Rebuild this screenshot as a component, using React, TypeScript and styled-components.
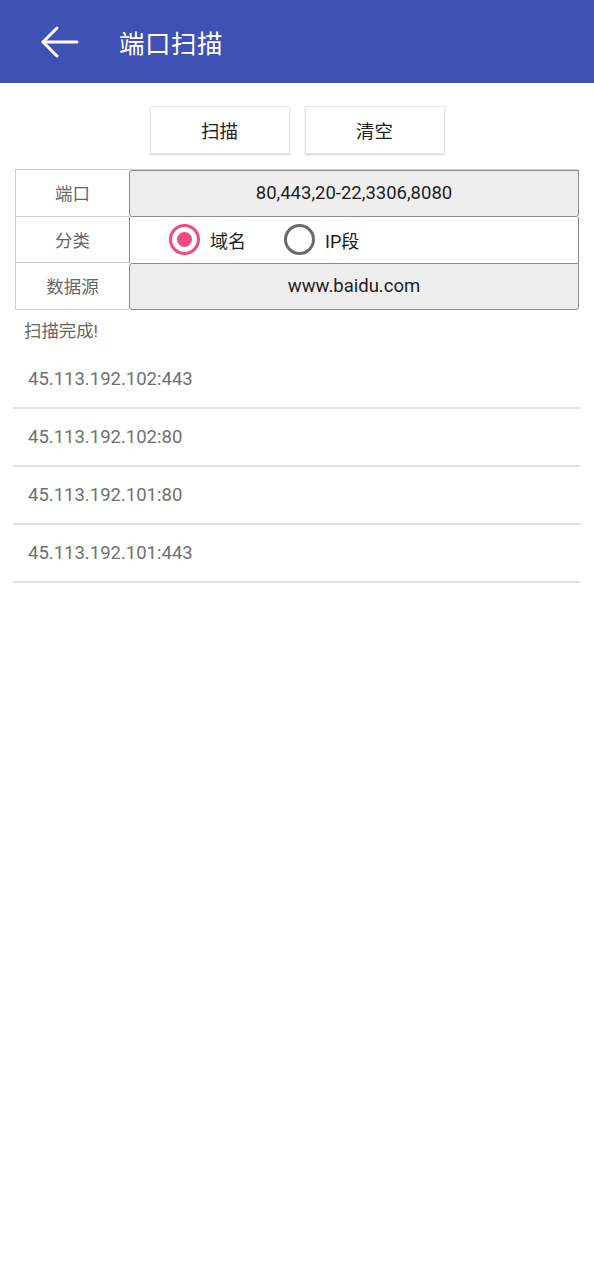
import React, { useState } from 'react'
import styled, { createGlobalStyle } from 'styled-components'

const GlobalStyle = createGlobalStyle`
  html, body {
    margin: 0;
    padding: 0;
    background: #ffffff;
    font-family: Roboto, "Noto Sans CJK SC", "Noto Sans", sans-serif;
  }
`

const Page = styled.div`
  width: 594px;
  min-height: 1280px;
  background: #fff;
`

const TopBar = styled.header`
  height: 83px;
  background: #3f51b5;
  display: flex;
  align-items: center;
  padding-left: 38px;
  box-sizing: border-box;
`

const BackButton = styled.button`
  width: 42px;
  height: 42px;
  padding: 0;
  border: 0;
  background: transparent;
  display: flex;
  align-items: center;
  justify-content: center;
`

const Title = styled.h1`
  margin: 0 0 0 39px;
  color: #fff;
  font-size: 25.5px;
  font-weight: 400;
  letter-spacing: 0.5px;
`

const Actions = styled.div`
  display: flex;
  justify-content: center;
  gap: 15px;
  margin-top: 23px;
`

const ActionButton = styled.button`
  width: 140px;
  height: 48px;
  border: 1px solid #e6e6e6;
  border-radius: 1px;
  background: #fff;
  box-shadow: 0 1px 2px rgba(0, 0, 0, 0.18);
  font-family: inherit;
  font-size: 18.5px;
  color: #222;
`

const Form = styled.div`
  margin: 15px 15px 0 15px;
  display: grid;
  grid-template-columns: 113px 1fr;
  grid-auto-rows: 46.6px;
  border-left: 1px solid #cfcfcf;
  border-top: 1px solid #cfcfcf;
`

const Label = styled.div`
  display: flex;
  align-items: center;
  justify-content: center;
  font-size: 17.5px;
  color: #666;
  border-bottom: 1px solid #cfcfcf;
`

const Field = styled.input`
  margin: 0;
  box-sizing: border-box;
  height: 100%;
  width: 100%;
  border: 1px solid #8a8a8a;
  border-radius: 3px 0 3px 3px;
  background: #eeeeee;
  text-align: center;
  font-family: inherit;
  font-size: 18.5px;
  color: #1e1e1e;
  outline: none;
`

const RadioCell = styled.div`
  display: flex;
  align-items: center;
  padding-left: 39px;
  border-left: 1px solid #8a8a8a;
  border-right: 1px solid #8a8a8a;
`

const RadioOption = styled.label`
  display: flex;
  align-items: center;
  gap: 10px;
  font-size: 18px;
  color: #1e1e1e;
  margin-right: 38px;
  cursor: pointer;
`

const RadioMark = styled.span<{ $on: boolean }>`
  width: 31px;
  height: 31px;
  box-sizing: border-box;
  border-radius: 50%;
  border: 3px solid ${p => (p.$on ? '#ef4b7e' : '#6b6b6b')};
  display: flex;
  align-items: center;
  justify-content: center;
  &::after {
    content: '';
    width: 15px;
    height: 15px;
    border-radius: 50%;
    background: ${p => (p.$on ? '#ef4b7e' : 'transparent')};
  }
`

const Status = styled.div`
  margin: 10px 0 0 24px;
  font-size: 17.4px;
  color: #666;
  line-height: 22px;
`

const ResultList = styled.ul`
  list-style: none;
  margin: 9px 13px 0 13px;
  padding: 0;
`

const ResultItem = styled.li`
  height: 58px;
  box-sizing: border-box;
  display: flex;
  align-items: center;
  padding-left: 15px;
  border-bottom: 2px solid #e2e2e2;
  font-size: 18.5px;
  color: #707070;
`

const results = [
  '45.113.192.102:443',
  '45.113.192.102:80',
  '45.113.192.101:80',
  '45.113.192.101:443',
]

export default function App() {
  const [kind, setKind] = useState('domain')

  return (
    <Page>
      <GlobalStyle />
      <TopBar>
        <BackButton aria-label="back">
          <svg width="40" height="40" viewBox="0 0 40 40" fill="none" stroke="#fff" strokeWidth="3" strokeLinecap="round" strokeLinejoin="round">
            <path d="M38 20H4" />
            <path d="M18 6L4 20l14 14" />
          </svg>
        </BackButton>
        <Title>端口扫描</Title>
      </TopBar>

      <Actions>
        <ActionButton>扫描</ActionButton>
        <ActionButton>清空</ActionButton>
      </Actions>

      <Form>
        <Label>端口</Label>
        <Field defaultValue="80,443,20-22,3306,8080" />
        <Label>分类</Label>
        <RadioCell>
          <RadioOption onClick={() => setKind('domain')}>
            <RadioMark $on={kind === 'domain'} />
            域名
          </RadioOption>
          <RadioOption onClick={() => setKind('ip')}>
            <RadioMark $on={kind === 'ip'} />
            IP段
          </RadioOption>
        </RadioCell>
        <Label>数据源</Label>
        <Field defaultValue="www.baidu.com" />
      </Form>

      <Status>扫描完成!</Status>

      <ResultList>
        {results.map(r => (
          <ResultItem key={r}>{r}</ResultItem>
        ))}
      </ResultList>
    </Page>
  )
}
